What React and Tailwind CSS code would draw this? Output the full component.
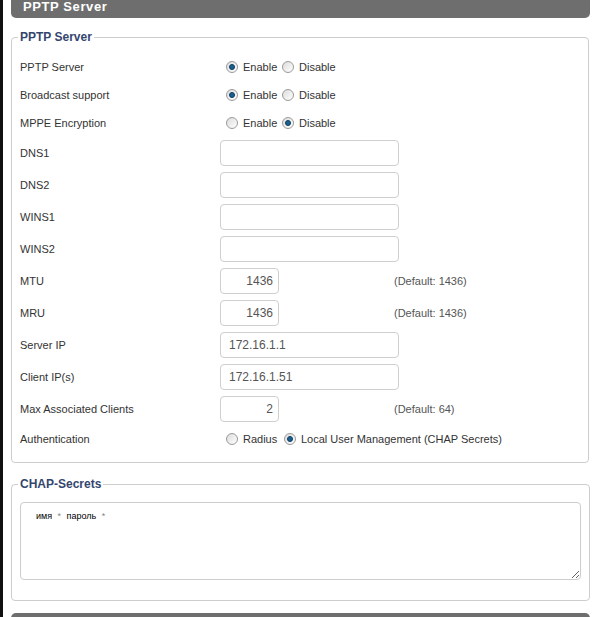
import React from 'react';

const Radio = ({ checked }) => (
  <span className="inline-flex items-center justify-center w-[12px] h-[12px] rounded-full border border-[#9a9a9a] bg-gradient-to-br from-[#dcdcdc] to-[#ffffff] shrink-0">
    {checked && <span className="w-[6px] h-[6px] rounded-full bg-[#1b5f8f] border border-[#0d3c60]" />}
  </span>
);

const RadioPair = ({ options, value, firstWidth = 'w-[56px]' }) => (
  <div className="flex items-center ml-[6px]">
    {options.map((opt, i) => (
      <label key={opt} className={`flex items-center ${i === 0 ? firstWidth : ''}`}>
        <Radio checked={value === i} />
        <span className="ml-[5px] text-[11px] text-[#333]">{opt}</span>
      </label>
    ))}
  </div>
);

const TextBox = ({ value = '', small }) => (
  <div
    className={`h-[26px] border border-[#cfcfcf] rounded-[4px] bg-white flex items-center text-[12px] text-[#555] ${
      small ? 'w-[59px] justify-end pr-[5px]' : 'w-[179px] pl-[8px]'
    }`}
  >
    {value}
  </div>
);

const Row = ({ label, h = 'h-[32px]', children, note }) => (
  <div className={`flex items-center ${h}`}>
    <div className="w-[200px] text-[11px] text-[#333]">{label}</div>
    <div className="w-[174px]">{children}</div>
    {note && <div className="text-[11px] text-[#555]">{note}</div>}
  </div>
);

export default function App() {
  return (
    <div className="flex min-h-[617px] bg-white" style={{ fontFamily: '"Liberation Sans", Arial, sans-serif' }}>
      <div className="w-[3px] bg-[#111] shrink-0" />
      <div className="pl-[8px] w-[590px]">
        <div className="h-[18px] w-[579px] bg-[#6e6e6e] rounded-b-[5px] pl-[12px] flex items-start">
          <span className="text-white font-bold text-[13px] leading-[13px] tracking-[0.6px]">PPTP Server</span>
        </div>

        <fieldset className="mt-[10px] w-[578px] border border-[#cdcdcd] rounded-[4px] pl-[8px] pb-[9px] pt-[7px]">
          <legend className="ml-[-2px] px-[2px] text-[12px] font-bold text-[#34466e]">PPTP Server</legend>
          <Row label="PPTP Server" h="h-[28px]">
            <RadioPair options={['Enable', 'Disable']} value={0} />
          </Row>
          <Row label="Broadcast support" h="h-[28px]">
            <RadioPair options={['Enable', 'Disable']} value={0} />
          </Row>
          <Row label="MPPE Encryption" h="h-[28px]">
            <RadioPair options={['Enable', 'Disable']} value={1} />
          </Row>
          <Row label="DNS1"><TextBox /></Row>
          <Row label="DNS2"><TextBox /></Row>
          <Row label="WINS1"><TextBox /></Row>
          <Row label="WINS2"><TextBox /></Row>
          <Row label="MTU" note="(Default: 1436)"><TextBox small value="1436" /></Row>
          <Row label="MRU" note="(Default: 1436)"><TextBox small value="1436" /></Row>
          <Row label="Server IP"><TextBox value="172.16.1.1" /></Row>
          <Row label="Client IP(s)"><TextBox value="172.16.1.51" /></Row>
          <Row label="Max Associated Clients" note="(Default: 64)"><TextBox small value="2" /></Row>
          <div className="flex items-center h-[28px]">
            <div className="w-[200px] text-[11px] text-[#333]">Authentication</div>
            <RadioPair
              options={['Radius', 'Local User Management (CHAP Secrets)']}
              value={1}
              firstWidth="w-[58px]"
            />
          </div>
        </fieldset>

        <fieldset className="mt-[12px] w-[578px] border border-[#cdcdcd] rounded-[4px] pl-[8px] pr-[8px] pt-[9px] pb-[20px]">
          <legend className="ml-[-2px] px-[2px] text-[12px] font-bold text-[#34466e]">CHAP-Secrets</legend>
          <div className="h-[78px] w-[561px] border border-[#cdcdcd] rounded-[4px] resize overflow-auto pl-[15px] pt-[7px]">
            <div className="text-[9px] text-black leading-[12px]">
              имя <span className="text-[#888] mx-[3px]">*</span> пароль <span className="text-[#888] ml-[3px]">*</span>
            </div>
          </div>
        </fieldset>

        <div className="mt-[12px] h-[8px] w-[579px] bg-[#6e6e6e] rounded-t-[5px]" />
      </div>
    </div>
  );
}
